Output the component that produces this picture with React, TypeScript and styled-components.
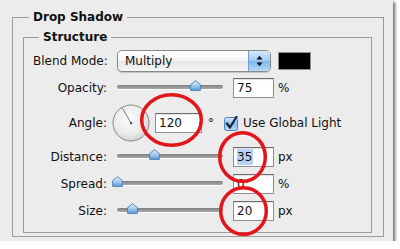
import React from "react";
import styled, { createGlobalStyle } from "styled-components";

const Global = createGlobalStyle`
  html, body { margin: 0; padding: 0; background: #ffffff; }
  body {
    font-family: "DejaVu Sans", "Liberation Sans", sans-serif;
    font-size: 12px;
    color: #111;
  }
`;

const Panel = styled.div`
  position: relative;
  box-sizing: border-box;
  width: 393px;
  height: 241px;
  padding: 10px 9px 4px 12px;
  background: #ececec;
  box-shadow: 2px 2px 3px rgba(0, 0, 0, 0.6);
`;

const Group = styled.fieldset<{ $pad: string }>`
  margin: 0;
  min-width: 0;
  box-sizing: border-box;
  padding: ${(p) => p.$pad};
  border: 1px solid #9c9c9c;
`;

const Title = styled.legend<{ $ml: number }>`
  margin-left: ${(p) => p.$ml}px;
  padding: 0 4px;
  font-weight: bold;
  font-size: 12px;
  line-height: 14px;
  color: #111;
`;

const Rows = styled.div`
  display: flex;
  flex-direction: column;
`;

const Row = styled.div<{ $h: number; $mt: number }>`
  display: flex;
  align-items: center;
  height: ${(p) => p.$h}px;
  margin-top: ${(p) => p.$mt}px;
`;

const Label = styled.span<{ $w: number; $left?: boolean }>`
  flex: none;
  width: ${(p) => p.$w}px;
  text-align: ${(p) => (p.$left ? "left" : "right")};
  white-space: nowrap;
  line-height: 14px;
`;

const Select = styled.div`
  flex: none;
  display: flex;
  width: 154px;
  height: 22px;
  box-sizing: border-box;
  border: 1px solid #8a8a8a;
  border-radius: 5px;
  overflow: hidden;
  background: linear-gradient(#ffffff, #f6f6f6 45%, #e6e6e6 55%, #f7f7f7);
  box-shadow: 0 1px 1px rgba(0, 0, 0, 0.18);
`;

const SelectText = styled.span`
  flex: 1;
  padding-left: 7px;
  line-height: 20px;
`;

const Stepper = styled.span`
  flex: none;
  width: 21px;
  display: flex;
  align-items: center;
  justify-content: center;
  border-left: 1px solid #6f9fd3;
  background: linear-gradient(#d3e8fb, #a3cdf4 48%, #7db5ea 52%, #b5dbf8);
`;

const Swatch = styled.span`
  flex: none;
  width: 33px;
  height: 18px;
  margin-left: 7px;
  box-sizing: border-box;
  background: #000;
  border: 1px solid #8e8e8e;
`;

const Slider = styled.div`
  position: relative;
  flex: none;
  width: 106px;
  height: 20px;
  margin-left: 10px;
`;

const Track = styled.div`
  margin-top: 7px;
  height: 4px;
  border-radius: 2px;
  background: linear-gradient(#7f7f7f, #a9a9a9);
  box-shadow: 0 1px 0 rgba(255, 255, 255, 0.8);
`;

const Thumb = styled.svg`
  position: absolute;
  top: 2px;
  width: 11px;
  height: 11px;
`;

const Field = styled.span<{ $w: number; $ml: number }>`
  flex: none;
  box-sizing: border-box;
  width: ${(p) => p.$w}px;
  height: 20px;
  margin-left: ${(p) => p.$ml}px;
  padding: 0 3px;
  border: 1px solid #8f8f8f;
  border-top-color: #6c6c6c;
  background: #fff;
  box-shadow: inset 0 1px 1px rgba(0, 0, 0, 0.12);
  line-height: 18px;
  font-size: 12px;
`;

const Selected = styled.span`
  background: #b4d3f7;
  padding: 1px 1px 1px 0;
`;

const Unit = styled.span<{ $ml: number }>`
  flex: none;
  margin-left: ${(p) => p.$ml}px;
  line-height: 14px;
`;

const Dial = styled.svg`
  flex: none;
  width: 38px;
  height: 38px;
  margin-left: 5px;
`;

const Check = styled.svg`
  flex: none;
  width: 15px;
  height: 15px;
  margin-left: 10px;
`;

const CheckText = styled.span`
  margin-left: 4px;
  white-space: nowrap;
  line-height: 14px;
`;

const Annotations = styled.svg`
  position: absolute;
  left: 0;
  top: 0;
  width: 393px;
  height: 241px;
  pointer-events: none;
  overflow: visible;
`;

function SliderControl({ pos }: { pos: number }) {
  return (
    <Slider>
      <Track />
      <Thumb viewBox="0 0 11 11" style={{ left: pos - 5.5 }}>
        <defs>
          <linearGradient id={`tg${pos}`} x1="0" y1="0" x2="0" y2="1">
            <stop offset="0" stopColor="#e3f0fc" />
            <stop offset="0.5" stopColor="#a6ccf2" />
            <stop offset="1" stopColor="#5c9ad8" />
          </linearGradient>
        </defs>
        <path
          d="M5.5 0.6 L10.4 4.6 L10.4 10.4 L0.6 10.4 L0.6 4.6 Z"
          fill={`url(#tg${pos})`}
          stroke="#4a7eb4"
          strokeWidth="0.9"
          strokeLinejoin="round"
        />
      </Thumb>
    </Slider>
  );
}

export default function App() {
  return (
    <>
      <Global />
      <Panel>
        <Group $pad="6px 11px 3px 10px">
          <Title $ml={6}>Drop Shadow</Title>
          <Group $pad="6px 10px 11px 9px">
            <Title $ml={6}>Structure</Title>
            <Rows>
              <Row $h={22} $mt={0}>
                <Label $w={84} $left>
                  Blend Mode:
                </Label>
                <Select>
                  <SelectText>Multiply</SelectText>
                  <Stepper>
                    <svg width="7" height="12" viewBox="0 0 7 12">
                      <path d="M0.5 4.6 L3.5 0.8 L6.5 4.6 Z" fill="#111" />
                      <path d="M0.5 7.4 L3.5 11.2 L6.5 7.4 Z" fill="#111" />
                    </svg>
                  </Stepper>
                </Select>
                <Swatch />
              </Row>

              <Row $h={20} $mt={6}>
                <Label $w={74}>Opacity:</Label>
                <SliderControl pos={78} />
                <Field $w={41} $ml={10}>75</Field>
                <Unit $ml={4}>%</Unit>
              </Row>

              <Row $h={38} $mt={6}>
                <Label $w={74}>Angle:</Label>
                <Dial viewBox="0 0 38 38">
                  <defs>
                    <radialGradient id="dialg" cx="0.45" cy="0.4" r="0.6">
                      <stop offset="0" stopColor="#fbfbfb" />
                      <stop offset="0.7" stopColor="#ebebeb" />
                      <stop offset="1" stopColor="#d2d2d2" />
                    </radialGradient>
                  </defs>
                  <circle cx="19" cy="19" r="18" fill="url(#dialg)" stroke="#8a8a8a" strokeWidth="1" />
                  <line x1="19" y1="19" x2="10.3" y2="4" stroke="#7a7a7a" strokeWidth="1" />
                  <rect x="18" y="18" width="2.2" height="2.2" fill="#555" />
                </Dial>
                <Field $w={47} $ml={5}>120</Field>
                <Unit $ml={6}>°</Unit>
                <Check viewBox="0 0 15 15">
                  <defs>
                    <linearGradient id="chk" x1="0" y1="0" x2="0" y2="1">
                      <stop offset="0" stopColor="#d6eafc" />
                      <stop offset="0.5" stopColor="#8fc0ef" />
                      <stop offset="1" stopColor="#b7dcf8" />
                    </linearGradient>
                  </defs>
                  <rect x="0.5" y="1.5" width="13" height="13" rx="2" fill="url(#chk)" stroke="#5282b8" />
                  <path
                    d="M3 7.5 L6 11.5 L12.5 0.8"
                    fill="none"
                    stroke="#16263a"
                    strokeWidth="2.2"
                    strokeLinecap="round"
                    strokeLinejoin="round"
                  />
                </Check>
                <CheckText>Use Global Light</CheckText>
              </Row>

              <Row $h={20} $mt={5}>
                <Label $w={74}>Distance:</Label>
                <SliderControl pos={37} />
                <Field $w={41} $ml={10}>
                  <Selected>35</Selected>
                </Field>
                <Unit $ml={4}>px</Unit>
              </Row>

              <Row $h={20} $mt={7}>
                <Label $w={74}>Spread:</Label>
                <SliderControl pos={0} />
                <Field $w={41} $ml={10}>0</Field>
                <Unit $ml={4}>%</Unit>
              </Row>

              <Row $h={20} $mt={7}>
                <Label $w={74}>Size:</Label>
                <SliderControl pos={15} />
                <Field $w={41} $ml={10}>20</Field>
                <Unit $ml={4}>px</Unit>
              </Row>
            </Rows>
          </Group>
        </Group>
        <Annotations viewBox="0 0 393 241">
          <ellipse cx="171.5" cy="120" rx="29.8" ry="25.3" fill="none" stroke="#e3151b" strokeWidth="3.5" />
          <ellipse cx="242.5" cy="157" rx="22.8" ry="24.3" fill="none" stroke="#e3151b" strokeWidth="3.5" />
          <ellipse cx="243.5" cy="211" rx="22.8" ry="23.3" fill="none" stroke="#e3151b" strokeWidth="3.5" />
        </Annotations>
      </Panel>
    </>
  );
}
